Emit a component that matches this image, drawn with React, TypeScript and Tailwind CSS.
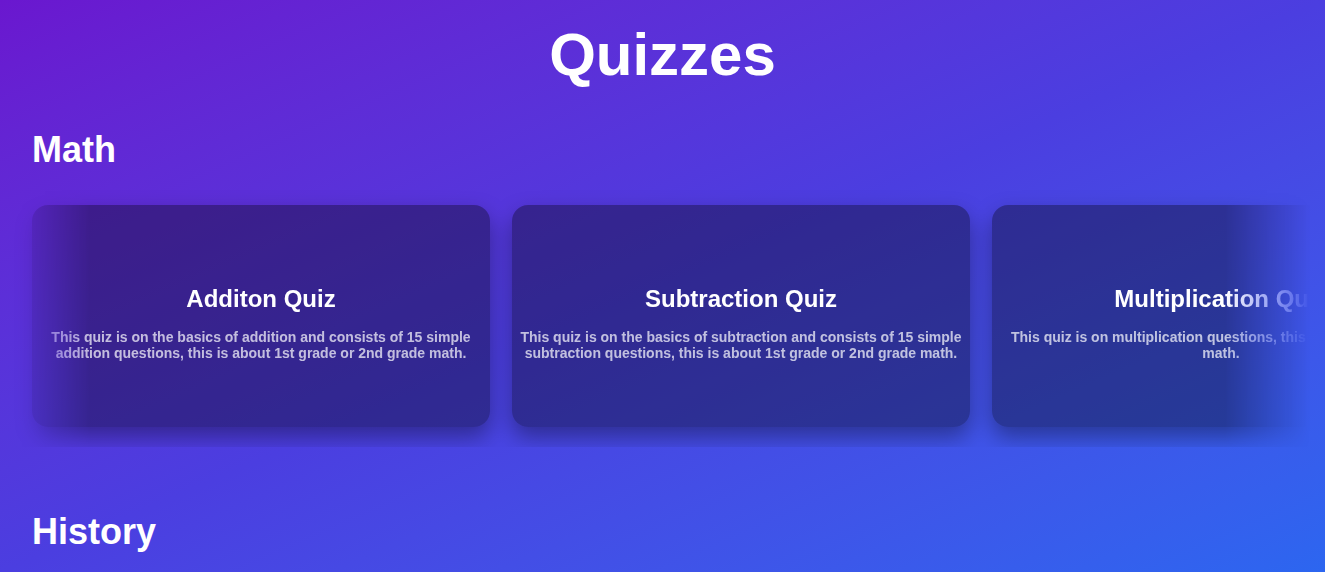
import React from 'react';

interface Quiz {
  title: string;
  description: string;
}

const mathQuizzes: Quiz[] = [
  {
    title: 'Additon Quiz',
    description:
      'This quiz is on the basics of addition and consists of 15 simple addition questions, this is about 1st grade or 2nd grade math.',
  },
  {
    title: 'Subtraction Quiz',
    description:
      'This quiz is on the basics of subtraction and consists of 15 simple subtraction questions, this is about 1st grade or 2nd grade math.',
  },
  {
    title: 'Multiplication Quiz',
    description:
      'This quiz is on multiplication questions, this is about 3rd grade math.',
  },
];

const QuizCard: React.FC<{ quiz: Quiz }> = ({ quiz }) => {
  return (
    <div className="w-[458px] h-[222px] shrink-0 rounded-2xl bg-black/35 shadow-[0_10px_22px_rgba(0,0,0,0.35)] flex flex-col items-center justify-center px-2 pt-3 text-center">
      <h3 className="text-2xl leading-8 font-bold text-white">{quiz.title}</h3>
      <p className="mt-3.5 text-sm leading-4 font-bold text-white/70">{quiz.description}</p>
    </div>
  );
};

export default function App() {
  return (
    <div className="min-h-screen bg-linear-to-br from-[#6a17cf] via-[#4b3ee0] to-[#2c66f0] font-[family-name:'Liberation_Sans',Arial,sans-serif] text-white">
      <h1 className="pt-[25px] text-6xl font-bold text-center">Quizzes</h1>

      <section className="mt-[45px]">
        <h2 className="px-8 text-4xl font-bold">Math</h2>
        <div className="mt-[15px] overflow-hidden [mask-image:linear-gradient(to_right,transparent_0,black_90px,black_calc(100%-100px),transparent_calc(100%-15px))]">
          <div className="flex gap-[22px] px-8 py-5">
            {mathQuizzes.map((q) => (
              <QuizCard key={q.title} quiz={q} />
            ))}
          </div>
        </div>
      </section>

      <section className="mt-[65px] pb-4">
        <h2 className="px-8 text-4xl font-bold">History</h2>
      </section>
    </div>
  );
}
